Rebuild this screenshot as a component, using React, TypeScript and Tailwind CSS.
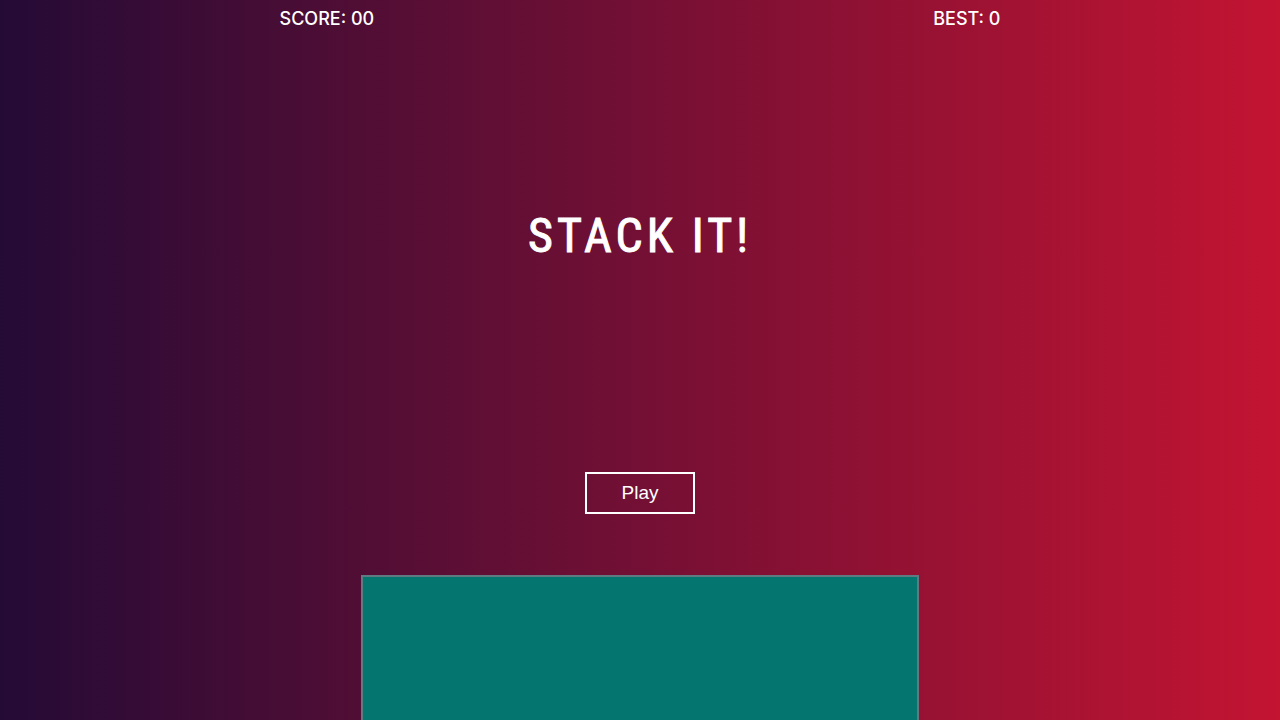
import React, { useState } from "react";

type StatProps = { label: string; value: string };

function Stat({ label, value }: StatProps) {
  return (
    <p className="whitespace-nowrap font-['Inter','Liberation_Sans',sans-serif] text-lg font-medium leading-[38px] text-white">
      {label}: {value}
    </p>
  );
}

export default function App() {
  const [playing, setPlaying] = useState(false);

  return (
    <div className="flex min-h-screen flex-col bg-linear-to-r from-[#240b36] to-[#c31432] [--tw-gradient-position:to_right]">
      <header className="flex justify-around">
        <Stat label="SCORE" value="00" />
        <Stat label="BEST" value="0" />
      </header>
      <main className="flex grow flex-col items-center pt-[162px]">
        <h1 className="font-['Roboto_Condensed','Liberation_Sans_Narrow','Roboto',sans-serif] text-5xl font-normal leading-[72px] tracking-[4px] text-white [-webkit-text-stroke:1px_white]">
          STACK IT!
        </h1>
        <button
          type="button"
          aria-pressed={playing}
          onClick={() => setPlaying(!playing)}
          className="mt-[200px] border-2 border-white px-[35px] py-2 font-['Liberation_Sans',Arial,sans-serif] text-[19px] leading-[22px] text-white"
        >
          Play
        </button>
        <div className="mt-[61px] w-full max-w-[558px] grow border-2 border-b-0 border-[#5f7a80] bg-[#04766f]" />
      </main>
    </div>
  );
}
